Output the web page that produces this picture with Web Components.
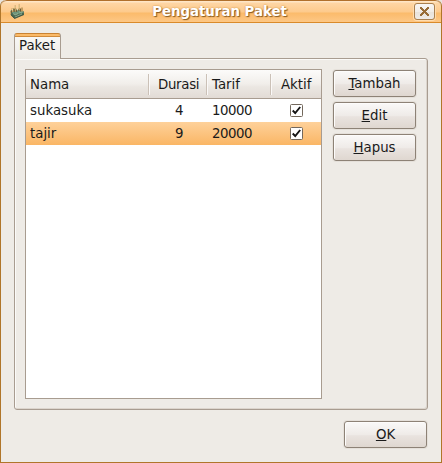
<!DOCTYPE html>
<html lang="id">
<head>
<meta charset="utf-8">
<title>Pengaturan Paket</title>
<style>
html,body{margin:0;height:100%;overflow:hidden}
body{background:#e9e4de;font:13.33px/16px "DejaVu Sans",sans-serif;color:#1a1a1a}
</style>
</head>
<body>
<app-window>
  <title-bar slot="title">Pengaturan Paket</title-bar>
  <tab-panel label="Paket">
    <package-table></package-table>
    <button-column>
      <push-button><u>T</u>ambah</push-button>
      <push-button><u>E</u>dit</push-button>
      <push-button><u>H</u>apus</push-button>
    </button-column>
  </tab-panel>
  <push-button slot="actions"><u>O</u>K</push-button>
</app-window>
<script>
function define(name, html, render) {
  const template = document.createElement('template');
  template.innerHTML = '<style>*{box-sizing:border-box}</style>' + html;
  customElements.define(name, class extends HTMLElement {
    constructor() {
      super();
      this.attachShadow({ mode: 'open' }).append(template.content.cloneNode(true));
    }
    connectedCallback() { if (render) render(this.shadowRoot, this); }
  });
}

define('app-window', `
<style>
:host{display:flex;flex-direction:column;box-sizing:border-box;width:442px;height:463px;border:1px solid #b0762a;border-top:0;border-radius:6px 6px 0 0;background:#eeebe6;overflow:hidden}
main{flex:1;display:flex;flex-direction:column;padding:10px 13px 14px}
footer{display:flex;justify-content:flex-end;margin-top:11px;padding-right:1px}
</style>
<slot name="title"></slot>
<main><slot></slot><footer><slot name="actions"></slot></footer></main>`);

define('title-bar', `
<style>
:host{display:flex;align-items:flex-start;justify-content:space-between;box-sizing:border-box;height:23px;padding:2px 6px 0 8px;border-top:1px solid #b0702c;border-bottom:1px solid #d98a2a;border-radius:6px 6px 0 0;
 background:linear-gradient(#ffe6c6 0,#ffe6c6 1px,#fed6a5 2px,#fdca8c 11px,#fbbb6b 12px,#fdc785 21px)}
.logo{display:block}
b{font-size:13.33px;line-height:16px;padding-top:1px;color:#fff;text-shadow:1px 1px 1px #8a5a20,0 0 2px #c98a3c}
.close{display:grid;place-items:center;width:21px;height:17px;border:1px solid #a98050;border-radius:3px;background:linear-gradient(#f8f6f3,#f2ede7 50%,#e8e2da 51%,#efebe6);box-shadow:0 0 0 1px #ffdcae}
.close svg{display:block}
</style>
<svg class="logo" width="16" height="17" viewBox="0 0 16 17">
 <path d="M1.500 8 4 5.500 13 6.500 15 9v2.500L5.500 15.500 2 12.500z" fill="#4b6953"/>
 <path d="M2 9 13.500 7.500 15 9.500 6 12z" fill="#6d957c"/>
 <path d="M2.500 5h2l.5 4h-2zM5.500 2.500h1.500v6H5.500zM9.500 1.500h1.500v6H9.500zM12 4.500h2v4h-2z" fill="#c59e62"/>
 <path d="M3 5.500h1v2H3zM5.500 3h1v2h-1zM9.500 2h1v3h-1zM7.500 5.500h1.500v2H7.500z" fill="#efd8a0"/>
 <path d="M4.500 6h1v3h-1zM11 5.500h1v3h-1zM7 7h1v2H7zM2 8h1v2H2z" fill="#715c38"/>
 <path d="M4 10.500 6 12l3-1.500M10 9l3 1M6 14l7-3" stroke="#9bb596" fill="none" stroke-width=".8"/>
 <path d="M2 11.500 5.500 15.500 15 11.500" stroke="#38503f" fill="none" stroke-width=".9"/>
</svg>
<b><slot></slot></b>
<span class="close"><svg width="9" height="9" viewBox="0 0 9 9"><path d="M0 0h2v1h1v1h1v1h1V2h1V1h1V0h2v2H8v1H7v1H6v1h1v1h1v1h1v2H7V8H6V7H5V6H4v1H3v1H2v1H0V7h1V6h1V5h1V4H2V3H1V2H0z" fill="#996d37"/></svg></span>`);

define('tab-panel', `
<style>
:host{display:flex;flex-direction:column;flex:1}
.tab{position:relative;z-index:1;width:47px;height:26px;margin-bottom:-1px;padding:4px 0 0 4px;border:1px solid #a89c90;border-top-color:#c98232;border-bottom:0;border-radius:3px 3px 0 0;background:linear-gradient(#fbba68 2px,#d08b3c 2px,#d08b3c 3px,#f8f7f5 3px,#eeebe6)}
.pane{flex:1;display:flex;gap:11px;padding:10px 11px 10px 10px;border:1px solid #a89c90;border-radius:0 3px 3px 3px;box-shadow:inset 1px 1px #fbfaf8,inset -1px -1px #dcd5cd}
</style>
<div class="tab"></div><div class="pane"><slot></slot></div>`,
(root, host) => { root.querySelector('.tab').textContent = host.getAttribute('label'); });

define('button-column', `<style>:host{display:flex;flex-direction:column;gap:5px;padding-top:1px}</style><slot></slot>`);

define('push-button', `
<style>
:host{display:block;box-sizing:border-box;width:83px;height:27px;border:1px solid #8d8276;border-radius:3px;padding-top:5px;text-align:center;background:linear-gradient(#faf9f8,#efebe8 50%,#e9e3df 55%,#dfd7d0);box-shadow:inset 1px 1px #fdfcfb,0 0 0 1px #e5e0da}
::slotted(u){text-decoration:underline;text-decoration-thickness:1px;text-underline-offset:1px;text-decoration-skip-ink:none}
</style>
<slot></slot>`);

define('check-box', `
<style>:host{display:block;width:13px;height:13px}svg{display:block}</style>
<svg width="13" height="13" viewBox="0 0 13 13"><rect x=".5" y=".5" width="12" height="12" rx="1" fill="#fff" stroke="#73685c"/>
<path d="M2.700 6.500 5.200 9 10.200 3" fill="none" stroke="#151515" stroke-width="1.900"/></svg>`);

define('package-table', `
<style>
:host{display:block;box-sizing:border-box;width:297px;height:330px;border:1px solid #a89c90;background:#fff}
.row{display:grid;grid-template-columns:123px 58px 64px 50px;height:23px;align-items:center}
.row>*{padding-left:4px;line-height:16px}
.head{height:29px;border-bottom:1px solid #a89c90;background:linear-gradient(#fcfbfa,#f1eeea 50%,#ebe7e2 60%,#e2dbd5)}
.head>*{height:21px;padding-top:3px;border-right:1px solid #cbc1b7;box-shadow:1px 0 #fbf9f8}
.head>:last-child{border:0;box-shadow:none;padding-left:10px}
.head>:nth-child(2){padding-left:9px;letter-spacing:-.3px}
.row>:nth-child(3){padding-left:5px}
.data>:nth-child(2){padding-left:26px}
.data>:nth-child(3){letter-spacing:-.48px}
.data check-box{padding:0;margin-left:19px}
.selected{background:linear-gradient(#fed19a,#fab665)}
</style>
<div class="row head"><span>Nama</span><span>Durasi</span><span>Tarif</span><span>Aktif</span></div>
<div class="row data"><span>sukasuka</span><span>4</span><span>10000</span><check-box></check-box></div>
<div class="row data selected"><span>tajir</span><span>9</span><span>20000</span><check-box></check-box></div>`);
</script>
</body>
</html>
